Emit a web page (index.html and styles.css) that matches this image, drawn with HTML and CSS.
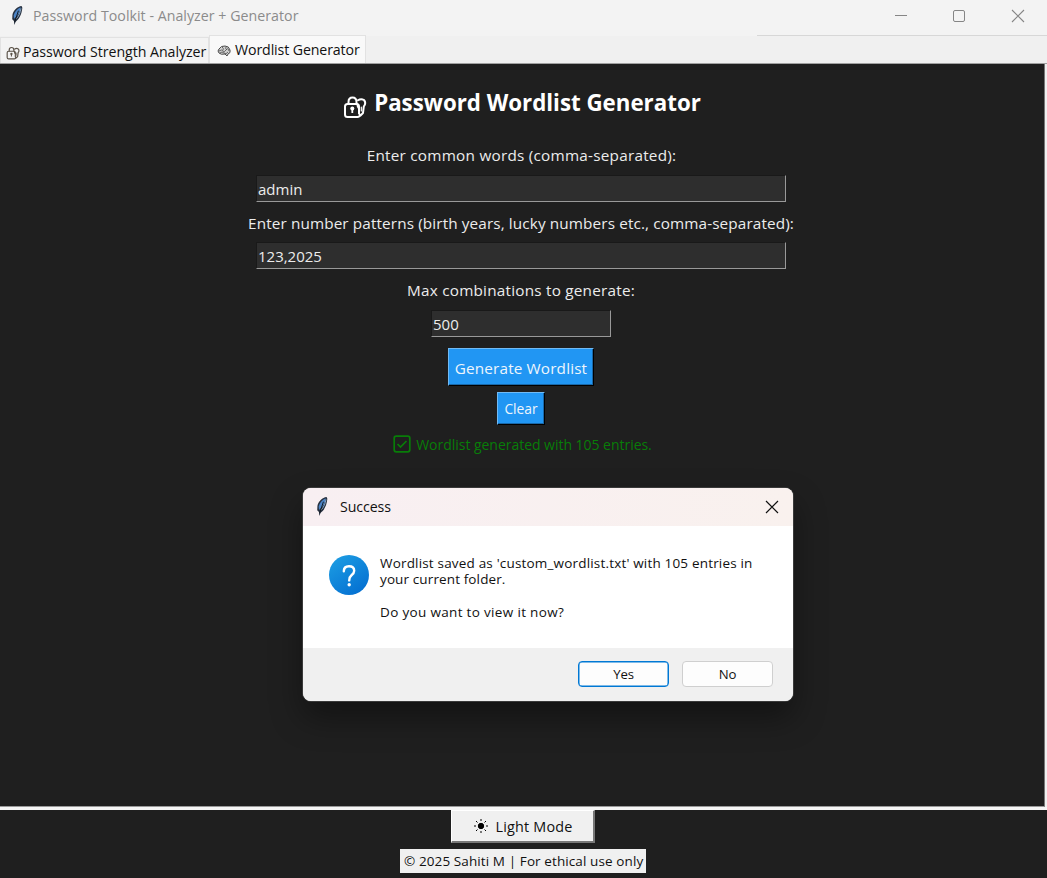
FILE: index.html
```html
<!DOCTYPE html>
<html lang="en">
<head>
<meta charset="utf-8">
<title>Password Toolkit - Analyzer + Generator</title>
<link rel="stylesheet" href="styles.css">
</head>
<body>
<svg class="defs" width="0" height="0" aria-hidden="true">
  <symbol id="feather" viewBox="0 0 14 22">
    <path d="M11.800 1C7.500 1.500 3 5.500 2.200 10.500L2 15L3.800 16.800L4.200 21L5.600 17.500C9.500 15 12 9.500 12.600 3Z" fill="#26303f"/>
    <path d="M10.800 2.300C7 4 4.300 7.500 3.500 11L3.900 14.500C8.500 11 10.500 7 10.800 2.300Z" fill="#4c84c6"/>
    <path d="M11.200 3.500C10.500 8 9 11.500 6.200 14.500" fill="none" stroke="#8fa9c4" stroke-width="1"/>
    <path d="M8.500 6L4.500 18" stroke="#101820" stroke-width="1"/>
  </symbol>
  <symbol id="lock" viewBox="0 0 24 24">
    <g fill="none" stroke="currentColor" stroke-width="2" stroke-linejoin="round" stroke-linecap="round">
      <path d="M17 20Q16.500 22 14.500 22H4.500Q2 22 2 19.500V11.500Q2 9 4.500 9H13.500Q16 9 16 11.500V13"/>
      <path d="M5.500 8.500V7Q5.500 2.500 9.500 2.500Q13.500 2.500 13.500 7V8.500"/>
      <path d="M15 5.300Q18 3.200 21 5Q23.500 8 20.800 11.500L20 18L17.500 20.500L16 18.500V13.500Q14.500 12 14.500 9.500"/>
      <path d="M18.300 12V16" stroke-width="1.200"/>
    </g>
    <circle cx="9.300" cy="13.500" r="2" fill="currentColor"/>
    <path d="M8.400 13h1.800v5H8.400z" fill="currentColor"/>
  </symbol>
</svg>
<div class="window">
  <header class="titlebar">
    <svg class="app-icon"><use href="#feather"/></svg>
    <span class="app-title">Password Toolkit - Analyzer + Generator</span>
    <svg class="controls" viewBox="0 0 132 14" fill="none" stroke="#858585">
      <path d="M0 6.500H12"/>
      <rect x="58.500" y="1.500" width="11" height="11" rx="1.500"/>
      <path d="M117 1L129 13M129 1L117 13" stroke-width="1.100"/>
    </svg>
  </header>
  <nav class="tabs">
    <div class="tab tab-analyzer"><svg class="tab-icon"><use href="#lock"/></svg><span>Password Strength Analyzer</span></div>
    <div class="tab tab-wordlist">
      <svg class="tab-icon brain" viewBox="0 0 14 12" fill="none" stroke="#4c4c4c">
        <path d="M2 8Q0 6 2 4Q4 .500 8 1Q12 1 13 5Q14 8 11 9L10 11L8 9Q4 10 2 8Z" fill="#d0d0d0"/>
        <path d="M2 6Q5 4 6 6T9 5T12 6M5 2Q7 3 6 5M9 2Q8 4 10 5M3 8Q5 6 7 8T11 7" stroke-width=".8"/>
      </svg><span>Wordlist Generator</span></div>
  </nav>
  <main class="panel">
    <h1 class="heading"><svg class="heading-icon"><use href="#lock"/></svg><span>Password Wordlist Generator</span></h1>
    <label class="label words">Enter common words (comma-separated):</label>
    <div class="field">admin</div>
    <label class="label numbers">Enter number patterns (birth years, lucky numbers etc., comma-separated):</label>
    <div class="field">123,2025</div>
    <label class="label max">Max combinations to generate:</label>
    <div class="field short">500</div>
    <button class="action generate">Generate Wordlist</button>
    <button class="action clear">Clear</button>
    <div class="status">
      <svg class="check" viewBox="0 0 18 18" fill="none" stroke="#087d08" stroke-width="1.700"><rect x="1.200" y="1.200" width="15.600" height="15.600" rx="2"/><path d="M4.500 9L7.500 12L13.500 6"/></svg>
      <span>Wordlist generated with 105 entries.</span>
    </div>
  </main>
  <footer class="footer">
    <button class="mode">
      <svg class="sun" viewBox="0 0 14 14" stroke="#000"><circle cx="7" cy="7" r="2.700" fill="#000"/><path d="M7 0V2M7 12V14M0 7H2M12 7H14M2 2L3.500 3.500M10.500 10.500L12 12M2 12L3.500 10.500M10.500 3.500L12 2"/></svg>
      <span>Light Mode</span>
    </button>
    <div class="copyright"><span>© 2025 Sahiti M | For ethical use only</span></div>
  </footer>
  <section class="dialog">
    <div class="dialog-title">
      <svg class="app-icon"><use href="#feather"/></svg>
      <span>Success</span>
      <svg class="close" viewBox="0 0 14 14" stroke="#111" stroke-width="1.200"><path d="M1 1L13 13M13 1L1 13"/></svg>
    </div>
    <div class="dialog-body">
      <svg class="question" viewBox="0 0 40 40">
        <defs><linearGradient id="blue" x1="0" y1="0" x2=".7" y2="1"><stop offset="0" stop-color="#1ea0e4"/><stop offset="1" stop-color="#0571d2"/></linearGradient></defs>
        <circle cx="20" cy="20" r="20" fill="url(#blue)"/>
        <path d="M14.800 16.200Q14.800 11.200 20 11.200Q25.200 11.200 25.200 15.800Q25.200 18.200 22.500 20.300Q20.200 22.200 20.200 25.400" fill="none" stroke="#fff" stroke-width="2.400" stroke-linecap="round"/>
        <circle cx="20.200" cy="29.800" r="1.700" fill="#fff"/>
      </svg>
      <div class="message">
        <div class="line1">Wordlist saved as 'custom_wordlist.txt' with 105 entries in</div>
        <div class="line2">your current folder.</div>
        <div class="line3">Do you want to view it now?</div>
      </div>
    </div>
    <div class="dialog-actions">
      <button class="choice primary">Yes</button>
      <button class="choice">No</button>
    </div>
  </section>
</div>
</body>
</html>
```
FILE: styles.css
```css
* { box-sizing: border-box; }
body { margin: 0; font-family: "Open Sans", "Noto Sans", sans-serif; }
button { font-family: inherit; padding: 0; }
.defs { display: block; position: absolute; }
.window { position: relative; width: 1047px; height: 878px; background: #f0f0f0; overflow: hidden; display: flex; flex-direction: column; white-space: nowrap; }

.titlebar { height: 36px; flex: none; background: linear-gradient(#d7d7d7, #d7d7d7) right bottom / 290px 1px no-repeat #f3f3f3; display: flex; align-items: flex-start; padding: 5px 20px 0 10px; color: #8b8b8b; font-size: 14.2px; line-height: 22px; }
.app-icon { width: 14px; height: 21px; flex: none; }
.app-title { margin-left: 9px; letter-spacing: .03px; }
.controls { width: 132px; height: 14px; margin: 4px 0 0 auto; }

.tabs { height: 28px; flex: none; display: flex; align-items: flex-end; color: #111; font-size: 14.2px; border-bottom: 1px solid #a0a0a0; }
.tab { display: flex; align-items: center; border: 1px solid #e2e2e2; border-bottom: 0; }
.tab-analyzer { width: 209px; height: 26px; padding: 2px 0 0 5px; background: #f3f3f3; letter-spacing: -.06px; }
.tab-wordlist { width: 157px; height: 28px; padding: 0 0 0 7px; background: #f9f9f9; letter-spacing: -.12px; }
.tab-icon { width: 14px; height: 14px; margin: 3px 3px 0 0; color: #5a5248; }
.brain { height: 12px; margin-right: 4px; }

.panel { height: 743px; flex: none; width: 1045px; background: #1f1f1f; border-right: 1px solid #777; border-bottom: 1px solid #999; padding: 19px 2px 0 0; display: flex; flex-direction: column; align-items: center; color: #ececec; }
.heading { display: flex; align-items: center; gap: 7px; height: 38px; margin: 0 0 2px; color: #fff; font-size: 22.300px; font-weight: 700; padding-left: 2px; }
.heading-icon { width: 24px; height: 24px; margin-top: 9px; }
.label { height: 22px; line-height: 22px; font-size: 15.300px; }
.words { margin-top: 21px; letter-spacing: .24px; padding-left: 1px; }
.numbers { margin-top: 10px; letter-spacing: .12px; }
.max { margin-top: 10px; letter-spacing: .22px; }
.field { width: 530px; height: 27px; flex: none; margin-top: 9px; padding: 1px 0 0 1px; background: #2e2e2e; border: 1px solid #191919; border-right-color: #999; border-bottom-color: #999; line-height: 24px; font-size: 15px; }
.numbers + .field { margin-top: 8px; }
.short { width: 180px; }
.action { flex: none; background: #2196f3; color: #edf5fc; border: 1px solid #71baf4; border-right-color: #000; border-bottom-color: #000; box-shadow: inset -1px -1px #1968a8; }
.generate { width: 146px; height: 38px; margin-top: 11px; padding-top: 1px; font-size: 15.300px; letter-spacing: .15px; }
.clear { width: 48px; height: 33px; margin-top: 6px; font-size: 13.800px; }
.status { height: 22px; margin-top: 8px; display: flex; align-items: center; gap: 5px; color: #087d08; font-size: 14px; letter-spacing: -.03px; padding-left: 3px; }
.check { width: 18px; height: 18px; }

.footer { height: 71px; flex: none; background: #1f1f1f; border-top: 3px solid #f6f6f6; display: flex; flex-direction: column; align-items: center; color: #111; }
.mode { width: 144px; height: 33px; display: flex; align-items: center; gap: 8px; padding-left: 22px; margin-right: 2px; background: #f0f0f0; border: 1px solid #fff; border-right: 2px solid #777; border-bottom: 2px solid #777; font-size: 14.400px; letter-spacing: .2px; color: #111; }
.sun { width: 14px; height: 14px; }
.copyright { width: 246px; height: 24px; margin: 6px 1px 0 0; padding-left: 4px; background: #f0f0f0; font-size: 13.500px; letter-spacing: .1px; line-height: 24px; }

.dialog { position: absolute; left: 303px; top: 488px; width: 490px; height: 213px; border-radius: 8px; overflow: hidden; background: #fff; color: #111; display: flex; flex-direction: column; box-shadow: 0 0 0 1px #3a3a3a, 0 16px 32px rgba(0,0,0,.4); }
.dialog-title { height: 38px; background: linear-gradient(90deg, #f8eff2, #f9f1ee); display: flex; align-items: center; padding: 0 14px 2px 12px; font-size: 14.2px; }
.dialog-title span { margin-left: 11px; letter-spacing: -.1px; }
.close { width: 14px; height: 14px; margin: 2px 0 0 auto; }
.dialog-body { height: 122px; display: flex; padding: 29px 0 0 26px; }
.question { width: 40px; height: 40px; }
.message { margin-left: 11px; font-size: 13.500px; line-height: 16px; }
.line1 { letter-spacing: .18px; }
.line2 { letter-spacing: .12px; }
.line3 { margin-top: 17px; letter-spacing: .33px; }
.dialog-actions { height: 53px; background: #f0f0f0; display: flex; justify-content: flex-end; gap: 13px; padding: 13px 20px 0 0; }
.choice { width: 91px; height: 26px; border: 1px solid #cfcfcf; border-radius: 4px; background: #fdfdfd; color: #111; font-size: 13.2px; letter-spacing: -.2px; }
.primary { border: 1px solid #0078d4; box-shadow: inset 0 0 0 .5px #0078d4; }
```
